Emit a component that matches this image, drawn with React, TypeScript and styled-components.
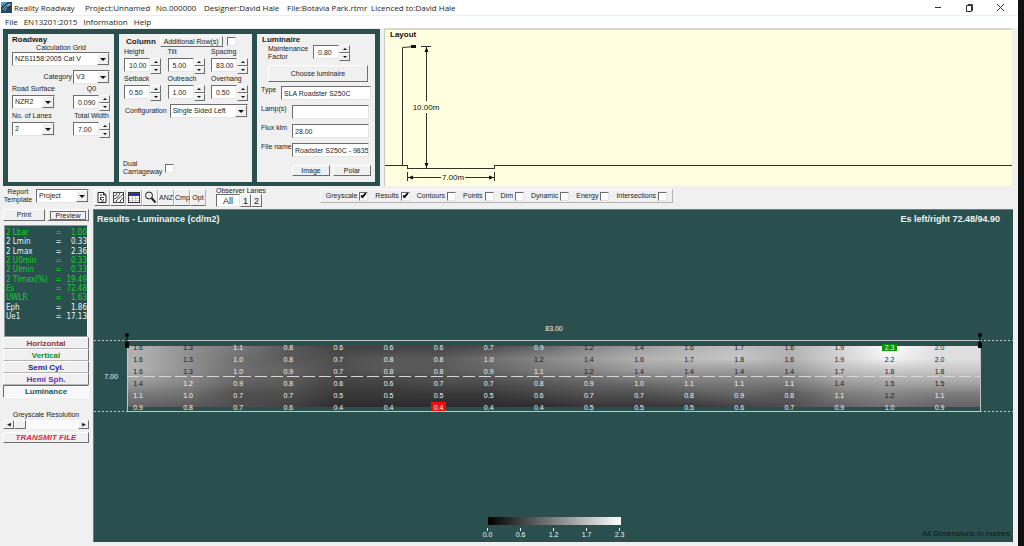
import React from "react";
import styled, { createGlobalStyle, css } from "styled-components";

const TEAL = "#29504f";
const FACE = "#f0f0f0";
const EDGE = "#6d6d6d";
const SOFT = "#b4b4b4";

const GlobalStyle = createGlobalStyle`
  *, *::before, *::after { box-sizing: border-box; }
  body { margin: 0; background: #111; }
  button, input, select { font: inherit; color: inherit; margin: 0; padding: 0; border-radius: 0; }
`;

const raised = css`
  border: 1px solid #fff;
  border-right-color: ${EDGE};
  border-bottom-color: ${EDGE};
  background: ${FACE};
`;
const sunken = css`
  border: 1px solid #e6e6e6;
  border-top-color: ${EDGE};
  border-left-color: ${EDGE};
  background: #fff;
`;

/* ---------- window frame ---------- */

const Window = styled.div`
  display: flex;
  flex-direction: column;
  min-height: 100vh;
  margin-right: 6px;
  background: ${FACE};
  color: #1c1c1c;
  font: 7px/8px "Liberation Sans", Arial, sans-serif;
`;
const TitleBar = styled.header`
  display: flex;
  align-items: center;
  height: 16px;
  padding: 0 12px 0 1px;
  border-bottom: 1px solid #ececec;
  background: #fff;
  font: 8px/14px "Open Sans", "Noto Sans", sans-serif;
  white-space: nowrap;
`;
const Caption = styled.span<{ $w: number }>`
  flex: 0 0 ${(p) => p.$w}px;
  svg { display: block; }
`;
const WindowButtons = styled.div`
  display: flex;
  gap: 20px;
  margin-left: auto;
`;
const WindowButton = styled.button`
  display: flex;
  width: 11px;
  height: 11px;
  border: 0;
  background: none;
`;
const MenuBar = styled.nav`
  display: flex;
  gap: 6px;
  height: 12px;
  padding: 0 5px;
  background: #fff;
  font: 8px/12px "Open Sans", "Noto Sans", sans-serif;
  a { color: inherit; text-decoration: none; }
`;

/* ---------- controls ---------- */

const Button = styled.button<{ $h?: number; $grow?: boolean }>`
  ${raised}
  display: flex;
  align-items: center;
  justify-content: center;
  flex: ${(p) => (p.$grow ? "1" : "none")};
  height: ${(p) => p.$h ?? 11}px;
  padding: 0 3px;
  white-space: nowrap;
`;
const TextInput = styled.input<{ $w?: number }>`
  ${sunken}
  flex: ${(p) => (p.$w ? `0 0 ${p.$w}px` : "1")};
  min-width: 0;
  height: 14px;
  padding-left: 2px;
`;
const Tick = styled.input`
  ${sunken}
  appearance: none;
  display: grid;
  place-items: center;
  flex: none;
  width: 9px;
  height: 9px;
  &:checked::after {
    content: "";
    width: 3px;
    height: 6px;
    margin-top: -2px;
    border: solid #111;
    border-width: 0 2px 2px 0;
    transform: rotate(42deg);
  }
`;
const SelectBox = styled.span<{ $w?: number }>`
  ${sunken}
  display: grid;
  grid-template-columns: 1fr 12px;
  flex: ${(p) => (p.$w ? `0 0 ${p.$w}px` : "1")};
  height: 14px;
  select {
    grid-area: 1 / 1 / 2 / 3;
    appearance: none;
    min-width: 0;
    padding-left: 2px;
    border: 0;
    background: none;
  }
  i {
    ${raised}
    grid-area: 1 / 2;
    display: grid;
    place-items: center;
    pointer-events: none;
  }
  i::after {
    content: "";
    border: 3px solid transparent;
    border-bottom: 0;
    border-top-color: #111;
  }
`;
const SpinBox = styled.span`
  display: flex;
  width: 37px;
  height: 16px;
  input {
    ${sunken}
    width: 26px;
    height: 14px;
    padding-left: 4px;
  }
`;
const SpinArrows = styled.span`
  display: grid;
  grid-template-rows: 1fr 1fr;
  width: 11px;
`;
const SpinArrow = styled.button<{ $up?: boolean }>`
  ${raised}
  display: grid;
  place-items: center;
  &::after {
    content: "";
    border: 2px solid transparent;
    border-width: ${(p) => (p.$up ? "0 2px 2px" : "2px 2px 0")};
    border-${(p) => (p.$up ? "bottom" : "top")}-color: #111;
  }
`;

function Select({ id, value, w, label }: { id?: string; value: string; w?: number; label?: string }) {
  return (
    <SelectBox $w={w}>
      <select id={id} aria-label={label} defaultValue={value}>
        <option>{value}</option>
      </select>
      <i />
    </SelectBox>
  );
}

function Spin({ id, value }: { id: string; value: string }) {
  return (
    <SpinBox>
      <input id={id} defaultValue={value} />
      <SpinArrows>
        <SpinArrow $up aria-label="Increase" />
        <SpinArrow aria-label="Decrease" />
      </SpinArrows>
    </SpinBox>
  );
}

/* ---------- settings ---------- */

const TopRow = styled.div`
  display: flex;
  gap: 4px;
  height: 158px;
  margin: 0 6px 0 3px;
`;
const Settings = styled.div`
  display: flex;
  flex: 0 0 377px;
  gap: 5px;
  margin-top: 1px;
  padding: 5px 5px 4px;
  background: ${TEAL};
`;
const Group = styled.section<{ $w: number }>`
  display: flex;
  flex-direction: column;
  flex: 0 0 ${(p) => p.$w}px;
  min-width: 0;
  padding: 1px 4px 6px;
  background: ${FACE};
`;
const GroupTitle = styled.h2`
  margin: 0;
  font: bold 8px/9px "Liberation Sans", Arial, sans-serif;
`;
const Line = styled.div<{ $top?: number; $gap?: number; $indent?: number; $between?: boolean; $high?: boolean }>`
  display: flex;
  align-items: ${(p) => (p.$high ? "flex-start" : "center")};
  gap: ${(p) => p.$gap ?? 3}px;
  margin-top: ${(p) => p.$top ?? 0}px;
  padding-left: ${(p) => p.$indent ?? 0}px;
  justify-content: ${(p) => (p.$between ? "space-between" : "flex-start")};
`;
const Field = styled.div<{ $center?: boolean }>`
  display: flex;
  flex-direction: column;
  gap: 2px;
  align-items: ${(p) => (p.$center ? "center" : "flex-start")};
`;
const Label = styled.label<{ $w?: number; $right?: boolean }>`
  flex: ${(p) => (p.$w ? `0 0 ${p.$w}px` : "none")};
  text-align: ${(p) => (p.$right ? "right" : "left")};
  white-space: nowrap;
`;
const CenterLabel = styled(Label)`
  text-align: center;
`;
const Bottom = styled(Line)`
  margin-top: auto;
`;

function RoadwayGroup() {
  return (
    <Group $w={106}>
      <GroupTitle>Roadway</GroupTitle>
      <CenterLabel htmlFor="grid">Calculation Grid</CenterLabel>
      <Line><Select id="grid" value="NZS1158:2005 Cat V" /></Line>
      <Line $top={4} $gap={1}>
        <Label htmlFor="category" $w={60} $right>Category</Label>
        <Select id="category" value="V3" />
      </Line>
      <Line $top={1} $between>
        <Field>
          <Label htmlFor="surface">Road Surface</Label>
          <SelectBoxWide id="surface" value="NZR2" />
        </Field>
        <Field $center>
          <Label htmlFor="q0">Q0</Label>
          <Spin id="q0" value="0.090" />
        </Field>
      </Line>
      <Line $top={1} $between>
        <Field>
          <Label htmlFor="lanes">No. of Lanes</Label>
          <SelectBoxWide id="lanes" value="2" />
        </Field>
        <Field $center>
          <Label htmlFor="width">Total Width</Label>
          <Spin id="width" value="7.00" />
        </Field>
      </Line>
    </Group>
  );
}

const Cell = styled.div`
  display: flex;
  width: 43px;
  height: 16px;
  align-items: flex-start;
`;
function SelectBoxWide(props: { id: string; value: string }) {
  return <Cell><Select {...props} /></Cell>;
}

const SpinRow = styled.div`
  display: flex;
  justify-content: space-between;
  margin-top: 1px;
  padding-left: 1px;
`;

function ColumnGroup() {
  const rows = [
    [["Height", "10.00"], ["Tilt", "5.00"], ["Spacing", "83.00"]],
    [["Setback", "0.50"], ["Outreach", "1.00"], ["Overhang", "0.50"]],
  ];
  return (
    <Group $w={133}>
      <Line $top={1} $gap={4} $indent={3}>
        <GroupTitle>Column</GroupTitle>
        <Button>Additional Row(s)</Button>
        <Tick type="checkbox" aria-label="Additional rows" />
      </Line>
      {rows.map((row, i) => (
        <SpinRow key={i}>
          {row.map(([name, value]) => (
            <Field key={name}>
              <Label htmlFor={name}>{name}</Label>
              <Spin id={name} value={value} />
            </Field>
          ))}
        </SpinRow>
      ))}
      <Line $top={3} $indent={2}>
        <Label htmlFor="config">Configuration</Label>
        <Select id="config" value="Single Sided Left" />
      </Line>
      <Bottom>
        <Label htmlFor="dual">Dual<br />Carriageway</Label>
        <Tick id="dual" type="checkbox" />
      </Bottom>
    </Group>
  );
}

const LuminaireLines = styled.div`
  display: flex;
  flex-direction: column;
  gap: 5px;
  margin-top: 4px;
`;

function LuminaireGroup() {
  return (
    <Group $w={118}>
      <Line $indent={1}><GroupTitle>Luminaire</GroupTitle></Line>
      <Line $top={1} $indent={7} $gap={5}>
        <Label htmlFor="mf" $w={40}>Maintenance<br />Factor</Label>
        <Spin id="mf" value="0.80" />
      </Line>
      <Line $top={4} $indent={7}>
        <Button $h={17} $grow>Choose luminaire</Button>
        <span />
      </Line>
      <LuminaireLines>
        <Line $gap={0} $high>
          <Label htmlFor="type" $w={20}>Type</Label>
          <TextInput id="type" defaultValue="SLA Roadster S250C" />
        </Line>
        <Line $gap={0} $high>
          <Label htmlFor="lamps" $w={31}>Lamp(s)</Label>
          <TextInput id="lamps" $w={77} defaultValue="" />
        </Line>
        <Line $gap={0} $high>
          <Label htmlFor="flux" $w={31}>Flux klm</Label>
          <TextInput id="flux" $w={77} defaultValue="28.00" />
        </Line>
        <Line $gap={0} $high>
          <Label htmlFor="file" $w={31}>File name</Label>
          <TextInput id="file" $w={77} defaultValue="Roadster S250C - 9835 lm" />
        </Line>
      </LuminaireLines>
      <Bottom $indent={31}>
        <Button $grow>Image</Button>
        <Button $grow>Polar</Button>
      </Bottom>
    </Group>
  );
}

/* ---------- cross-section drawing ---------- */

const LayoutPane = styled.section`
  flex: 1;
  min-width: 0;
  border-top: 2px solid #d8d8d0;
  border-left: 1px solid #c8c8c0;
  background: #ffffe0;
  svg { display: block; width: 100%; height: 156px; }
  text { font: 8px "Liberation Sans", Arial, sans-serif; fill: #111; }
  .title { font-weight: bold; }
`;

function LayoutDrawing() {
  return (
    <LayoutPane>
      <svg role="img" aria-label="Layout" shapeRendering="crispEdges">
        <text className="title" x="5" y="7">Layout</text>
        <g fill="none" stroke="#33332c">
          <path d="M0 135.5H22.500V138.500H109.500V135.500H120" />
          <line x1="119" y1="135.500" x2="100%" y2="135.500" />
          <path d="M17.500 135V17.500L31 16.500" shapeRendering="auto" />
          <path d="M36 16.500H46M41.500 17V71M41.500 83V138" />
          <path d="M22.500 142V151M109.500 142V151M23 147.500H56M80 147.500H109" />
        </g>
        <g fill="#111" shapeRendering="auto">
          <rect x="26" y="15" width="5" height="3" />
          <path d="M41.500 17l-2 5h4zM41.500 138l-2 -5h4zM23 147.500l5 -2v4zM109 147.500l-5 -2v4z" />
        </g>
        <text x="41" y="80" textAnchor="middle">10.00m</text>
        <text x="68" y="150" textAnchor="middle">7.00m</text>
      </svg>
    </LayoutPane>
  );
}

/* ---------- side bar ---------- */

const Body = styled.div`
  display: flex;
  flex: 1;
  padding: 1px 5px 4px 3px;
`;
const Side = styled.aside`
  display: flex;
  flex-direction: column;
  flex: 0 0 90px;
  padding-right: 4px;
`;
const Preview = styled(Button)`
  span { flex: 1; outline: 1px solid ${EDGE}; line-height: 7px; }
`;
const Readout = styled.table`
  width: 84px;
  height: 112px;
  margin: 4px 0 0 1px;
  padding: 2px 0 15px 1px;
  border: 1px solid #8d9a99;
  border-right-color: #fff;
  border-spacing: 0;
  background: ${TEAL};
  color: #eef4f3;
  font: 8px/9px "DejaVu Sans Condensed", "DejaVu Sans", sans-serif;
  td { padding: 0; white-space: nowrap; }
  td:nth-child(2) { width: 7px; }
  td:last-child { text-align: right; }
`;
const ReadoutRow = styled.tr<{ $ok: boolean }>`
  color: ${(p) => (p.$ok ? "#12d321" : "inherit")};
`;
const Modes = styled.div`
  display: flex;
  flex-direction: column;
  margin-bottom: 13px;
`;
const ModeButton = styled.button<{ $color: string; $active?: boolean }>`
  height: 12px;
  border: 1px solid #fff;
  border-right-color: ${EDGE};
  border-bottom-color: ${SOFT};
  background: ${FACE};
  color: ${(p) => p.$color};
  font-size: 8px;
  font-weight: bold;
  line-height: 9px;
  ${(p) =>
    p.$active &&
    css`
      height: 13px;
      border-color: ${EDGE} #fff #fff ${EDGE};
      background: #f8f8f8;
    `}
`;
const Scroll = styled.div`
  display: flex;
  height: 9px;
  margin: 1px 0 3px;
  background: #fafafa;
`;
const ScrollEnd = styled.button`
  ${raised}
  width: 11px;
  font-size: 5px;
  line-height: 5px;
`;
const Thumb = styled.span`
  ${raised}
  flex: 0 0 12px;
  margin-right: auto;
`;
const Transmit = styled(Button)`
  color: #e22b3c;
  font: italic bold 8px/9px "Liberation Sans", Arial, sans-serif;
`;

const readings: [string, string, boolean][] = [
  ["2 Lbar", "1.00", true],
  ["2 Lmin", "0.33", false],
  ["2 Lmax", "2.36", false],
  ["2 U0min", "0.33", true],
  ["2 UImin", "0.33", true],
  ["2 TImax(%)", "19.49", true],
  ["Es", "72.48", true],
  ["UWLR", "1.63", true],
  ["Eph", "1.86", false],
  ["Ue1", "17.13", false],
];
const modes: [string, string][] = [
  ["Horizontal", "#983236"],
  ["Vertical", "#158a1c"],
  ["Semi Cyl.", "#1a1a9c"],
  ["Hemi Sph.", "#6a2fb0"],
  ["Luminance", "#1d5555"],
];

function SideBar() {
  return (
    <Side>
      <Line $top={1} $gap={3}>
        <CenterLabel htmlFor="template" $w={30}>Report<br />Template</CenterLabel>
        <Select id="template" value="Project" />
      </Line>
      <Line $top={5} $gap={2}>
        <Button $grow $h={12}>Print</Button>
        <Preview $grow $h={12}><span>Preview</span></Preview>
      </Line>
      <Readout>
        <tbody>
          {readings.map(([name, value, ok]) => (
            <ReadoutRow key={name} $ok={ok}>
              <td>{name}</td>
              <td>=</td>
              <td>{value}</td>
            </ReadoutRow>
          ))}
        </tbody>
      </Readout>
      <Modes>
        {modes.map(([name, color]) => (
          <ModeButton key={name} $color={color} $active={name === "Luminance"}>{name}</ModeButton>
        ))}
      </Modes>
      <CenterLabel as="span">Greyscale Resolution</CenterLabel>
      <Scroll>
        <ScrollEnd aria-label="Lower">◀</ScrollEnd>
        <Thumb />
        <ScrollEnd aria-label="Higher">▶</ScrollEnd>
      </Scroll>
      <Transmit>TRANSMIT FILE</Transmit>
    </Side>
  );
}

/* ---------- tool bar ---------- */

const Main = styled.main`
  display: flex;
  flex-direction: column;
  flex: 1;
  min-width: 0;
`;
const ToolRow = styled.div`
  display: flex;
  align-items: flex-start;
  height: 22px;
  padding: 2px 0 0 1px;
`;
const ToolButton = styled.button`
  ${raised}
  border-right-color: ${SOFT};
  display: grid;
  place-items: center;
  width: 16px;
  height: 17px;
`;
const Lanes = styled.fieldset`
  display: flex;
  flex-direction: column;
  margin: -2px 0 0 10px;
  padding: 0;
  border: 0;
`;
const LaneButtons = styled.div`
  display: flex;
  margin-top: -1px;
`;
const LaneButton = styled.button<{ $active?: boolean }>`
  ${(p) => (p.$active ? sunken : raised)}
  width: ${(p) => (p.$active ? 24 : 11)}px;
  height: 13px;
  font-size: 9px;
  line-height: 10px;
`;
const Options = styled.div`
  display: flex;
  align-items: center;
  gap: 7px;
  height: 14px;
  margin-left: 54px;
  padding: 0 5px;
  border: 1px solid #fafafa;
  border-right-color: ${SOFT};
  border-bottom-color: ${SOFT};
  label { display: flex; align-items: center; gap: 2px; }
`;

const options: [string, boolean][] = [
  ["Greyscale", true],
  ["Results", true],
  ["Contours", false],
  ["Points", false],
  ["Dim", false],
  ["Dynamic", false],
  ["Energy", false],
  ["Intersections", false],
];

function ToolBar() {
  return (
    <ToolRow>
      <ToolButton aria-label="Report">
        <svg width="12" height="13" viewBox="0 0 12 13" fill="none" stroke="#222">
          <path d="M2 1.500H7.500L10 4V11.500H2Z" fill="#fff" />
          <path d="M7.500 1.500V4H10M4 4H6" />
          <path d="M4 6.500H8M4 8.500H6M7 8.500H8M5 10H8M4.500 6V9" strokeWidth="0.800" />
        </svg>
      </ToolButton>
      <ToolButton aria-label="Contours">
        <svg width="13" height="13" viewBox="0 0 13 13" fill="none" stroke="#333" strokeWidth="0.900">
          <rect x="1.500" y="1.500" width="10" height="10" fill="#fff" />
          <path d="M2 5Q5 5 5 2M2 8Q7 7 8 2M4 11Q4 9 7 7Q10 5 11 3M8 11Q8 9 11 7" />
        </svg>
      </ToolButton>
      <ToolButton aria-label="Table">
        <svg width="12" height="11" viewBox="0 0 12 11">
          <rect x="0.500" y="0.500" width="11" height="10" fill="#fff" stroke="#333" />
          <rect x="1" y="1" width="10" height="3" fill="#2334b4" />
          <path d="M1 6.500H11M1 8.500H11M4.500 4V10M7.500 4V10" stroke="#ccc" />
        </svg>
      </ToolButton>
      <ToolButton aria-label="Zoom">
        <svg width="13" height="13" viewBox="0 0 13 13">
          <circle cx="5" cy="4.500" r="3.500" fill="#e4eef4" stroke="#222" />
          <path d="M7.500 7L11.500 11.500" stroke="#222" strokeWidth="2" />
        </svg>
      </ToolButton>
      <ToolButton>ANZ</ToolButton>
      <ToolButton>Cmp</ToolButton>
      <ToolButton>Opt</ToolButton>
      <Lanes>
        <span>Observer Lanes</span>
        <LaneButtons>
          <LaneButton $active>All</LaneButton>
          <LaneButton>1</LaneButton>
          <LaneButton>2</LaneButton>
        </LaneButtons>
      </Lanes>
      <Options>
        {options.map(([name, on]) => (
          <label key={name}>
            {name}
            <Tick type="checkbox" defaultChecked={on} />
          </label>
        ))}
      </Options>
    </ToolRow>
  );
}

/* ---------- results ---------- */

const Results = styled.section`
  display: flex;
  flex-direction: column;
  flex: 1;
  border-top: 1px solid #777;
  border-left: 1px solid #777;
  background: ${TEAL};
  color: #eef4f3;
`;
const ResultsHead = styled.div`
  display: flex;
  justify-content: space-between;
  padding: 4px 13px 0 3px;
  font: bold 9px/10px "Liberation Sans", Arial, sans-serif;
`;
const Chart = styled.svg`
  display: block;
  width: 100%;
  height: auto;
  margin: auto 0;
  text { font: 7px "Liberation Sans", Arial, sans-serif; text-anchor: middle; }
`;
const ResultsFoot = styled.div`
  display: grid;
  grid-template-columns: 1fr 150px 1fr;
  align-items: end;
  padding: 0 3px 3px;
`;
const Legend = styled.div`
  display: flex;
  flex-direction: column;
`;
const Ramp = styled.div`
  height: 8px;
  margin: 0 8px 3px 9px;
  background: linear-gradient(90deg, #000, #fff);
`;
const Scale = styled.div`
  display: flex;
  justify-content: space-between;
  margin: 0 2px;
  span { display: flex; flex-direction: column; align-items: center; width: 14px; }
  span::before { content: ""; width: 1px; height: 3px; background: #eef4f3; }
`;
const Note = styled.span`
  color: #0d1514;
  font-size: 8px;
  text-align: right;
  line-height: 10px;
`;

const values = [
  [1.6, 1.3, 1.1, 0.8, 0.6, 0.6, 0.6, 0.7, 0.9, 1.2, 1.4, 1.6, 1.7, 1.6, 1.9, 2.3, 2.0],
  [1.6, 1.3, 1.0, 0.8, 0.7, 0.8, 0.8, 1.0, 1.2, 1.4, 1.6, 1.7, 1.8, 1.6, 1.9, 2.2, 2.0],
  [1.6, 1.3, 1.0, 0.9, 0.7, 0.8, 0.8, 0.9, 1.1, 1.2, 1.4, 1.4, 1.4, 1.4, 1.7, 1.8, 1.8],
  [1.4, 1.2, 0.9, 0.8, 0.6, 0.6, 0.7, 0.7, 0.8, 0.9, 1.0, 1.1, 1.1, 1.1, 1.4, 1.5, 1.5],
  [1.1, 1.0, 0.7, 0.7, 0.5, 0.5, 0.5, 0.5, 0.6, 0.7, 0.7, 0.8, 0.9, 0.8, 1.1, 1.2, 1.1],
  [0.9, 0.8, 0.7, 0.6, 0.4, 0.4, 0.4, 0.4, 0.4, 0.5, 0.5, 0.5, 0.6, 0.7, 0.9, 1.0, 0.9],
];
const LEFT = 33;
const RIGHT = 886;
const TOP = 114;
const STEP = 12;
const colX = (c: number) => 44 + c * 50.1;

const shade = (v: number) => {
  const g = Math.min(255, Math.round((v / 2.3) * 255));
  return `rgb(${g},${g},${g})`;
};
const strips = Array.from({ length: 61 }, (_, y) => {
  const r = Math.min(4, Math.floor(y / STEP));
  const t = Math.min(1, y / STEP - r);
  return values[r].map((v, c) => shade(v + (values[r + 1][c] - v) * t));
});

function Lamp({ x }: { x: number }) {
  return (
    <g fill="#050505">
      <circle cx={x} cy={TOP - 11} r="2" />
      <rect x={x - 0.5} y={TOP - 11} width="1" height="9" />
      <rect x={x - 2} y={TOP - 4} width="4" height="6" />
    </g>
  );
}

function RoadChart() {
  return (
    <Chart viewBox="0 -3 919 284" role="img" aria-label="Luminance along the road">
      <defs>
        {strips.map((stops, y) => (
          <linearGradient key={y} id={`strip${y}`} gradientUnits="userSpaceOnUse" x1={colX(0)} x2={colX(16)} y1="0" y2="0">
            {stops.map((color, c) => (
              <stop key={c} offset={c / 16} stopColor={color} />
            ))}
          </linearGradient>
        ))}
      </defs>
      {strips.map((_, y) => (
        <rect key={y} x={LEFT} y={TOP + y} width={RIGHT - LEFT} height="1" fill={`url(#strip${y})`} shapeRendering="crispEdges" />
      ))}
      <g stroke="#b9c6c5" fill="none" shapeRendering="crispEdges">
        <path d={`M${LEFT} 108.500H${RIGHT}M${LEFT} 179.500H${RIGHT}M${LEFT + 0.5} ${TOP}V180M${RIGHT + 0.5} ${TOP}V180`} />
        <path d={`M0 108.500H${LEFT}M${RIGHT} 108.500H919M0 179.500H${LEFT}M${RIGHT} 179.500H919`} strokeDasharray="2 2" />
        <path d={`M${LEFT} 144.500H${RIGHT}`} stroke="#d6d6d6" strokeDasharray="12 4" />
      </g>
      <rect x="337" y="170" width="15" height="9" fill="#f20d0d" />
      <rect x="788" y="112" width="15" height="7" fill="#0a960a" />
      {values.map((row, r) =>
        row.map((v, c) => {
          const peak = v === 2.3;
          const dark = v >= 1.2 && !peak && !(r === 3 && c === 1);
          return (
            <text key={`${r}-${c}`} x={colX(c)} y={TOP + 4 + r * STEP} fill={dark ? "#1a1a1a" : "#f4f4f4"}>
              {v.toFixed(1)}
            </text>
          );
        })
      )}
      <Lamp x={33} />
      <Lamp x={886} />
      <text x="460" y="99" fill="#f4f4f4">83.00</text>
      <text x="17" y="147" fill="#f4f4f4">7.00</text>
    </Chart>
  );
}

export default function App() {
  return (
    <Window>
      <GlobalStyle />
      <TitleBar>
        <Caption $w={13}>
          <svg width="11" height="11" viewBox="0 0 11 11">
            <rect width="11" height="11" fill="#1c4a66" />
            <path d="M0 0H7L0 5Z" fill="#4aa6cf" />
            <path d="M1 8L4 4L9 1L10 3L6 6L4 9Z" fill="#8fa3a8" />
            <path d="M2 9L6 4M6 6L10 4" stroke="#1b2227" />
          </svg>
        </Caption>
        <Caption $w={71}>Reality Roadway</Caption>
        <Caption $w={71}>Project:Unnamed</Caption>
        <Caption $w={48}>No.000000</Caption>
        <Caption $w={83}>Designer:David Hale</Caption>
        <Caption $w={84}>File:Botavia Park.rtmr</Caption>
        <span>Licenced to:David Hale</span>
        <WindowButtons>
          {[
            ["Minimise", "M2 5.5H8"],
            ["Restore", "M2.500 3.500H7.500V9.500H2.500ZM4 3V2.500H8.500V8.500H8"],
            ["Close", "M2 2L9 9M9 2L2 9"],
          ].map(([name, d]) => (
            <WindowButton key={name} aria-label={name}>
              <svg width="11" height="11" viewBox="0 0 11 11" fill="none" stroke="#333"><path d={d} /></svg>
            </WindowButton>
          ))}
        </WindowButtons>
      </TitleBar>
      <MenuBar>
        <a href="#file">File</a>
        <a href="#standard">EN13201:2015</a>
        <a href="#information">Information</a>
        <a href="#help">Help</a>
      </MenuBar>
      <TopRow>
        <Settings>
          <RoadwayGroup />
          <ColumnGroup />
          <LuminaireGroup />
        </Settings>
        <LayoutDrawing />
      </TopRow>
      <Body>
        <SideBar />
        <Main>
          <ToolBar />
          <Results>
            <ResultsHead>
              <span>Results - Luminance (cd/m2)</span>
              <span>Es left/right 72.48/94.90</span>
            </ResultsHead>
            <RoadChart />
            <ResultsFoot>
              <span />
              <Legend>
                <Ramp />
                <Scale>
                  {["0.0", "0.6", "1.2", "1.7", "2.3"].map((n) => <span key={n}>{n}</span>)}
                </Scale>
              </Legend>
              <Note>All Dimensions in metres</Note>
            </ResultsFoot>
          </Results>
        </Main>
      </Body>
    </Window>
  );
}
